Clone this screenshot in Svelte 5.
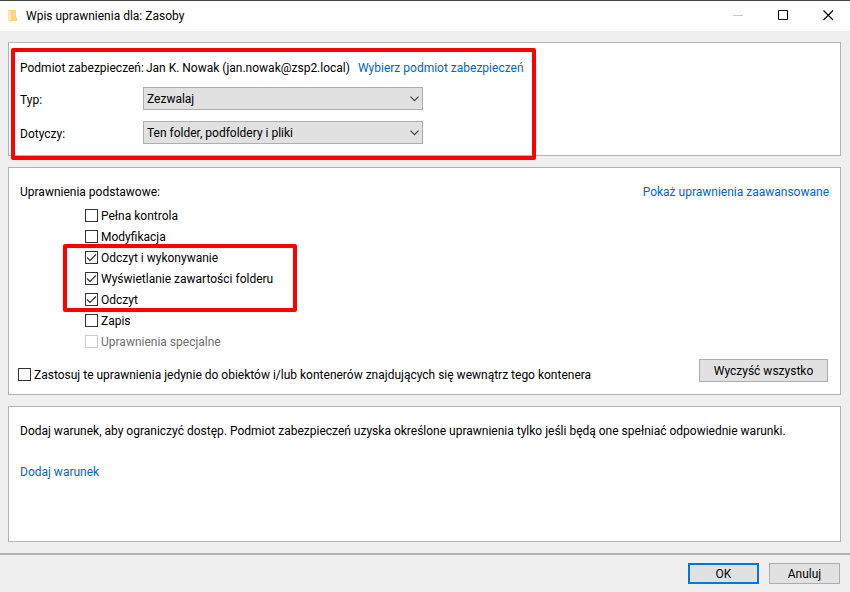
<!-- permission entry dialog: principal, basic permissions, condition -->
<script lang="ts">
	type Permission = { id: string; label: string; checked: boolean; disabled?: boolean };

	let entryType = $state('Zezwalaj');
	let scope = $state('Ten folder, podfoldery i pliki');
	let onlyThisContainer = $state(false);

	const entryTypes = ['Zezwalaj', 'Odmów'];
	const scopes = ['Tylko ten folder', 'Ten folder, podfoldery i pliki', 'Ten folder i podfoldery', 'Ten folder i pliki'];

	let before = $state<Permission[]>([
		{ id: 'full', label: 'Pełna kontrola', checked: false },
		{ id: 'modify', label: 'Modyfikacja', checked: false }
	]);
	let marked = $state<Permission[]>([
		{ id: 'read-exec', label: 'Odczyt i wykonywanie', checked: true },
		{ id: 'list', label: 'Wyświetlanie zawartości folderu', checked: true },
		{ id: 'read', label: 'Odczyt', checked: true }
	]);
	let after = $state<Permission[]>([
		{ id: 'write', label: 'Zapis', checked: false },
		{ id: 'special', label: 'Uprawnienia specjalne', checked: false, disabled: true }
	]);

	function clearAll() {
		for (const p of [...before, ...marked, ...after]) p.checked = false;
		onlyThisContainer = false;
	}
</script>

{#snippet chevron()}
	<svg class="chevron" viewBox="0 0 9 6" aria-hidden="true"><path d="M0.5 0.7 4.5 4.7 8.5 0.7" /></svg>
{/snippet}

{#snippet tick()}
	<svg class="tick" viewBox="0 0 13 13" aria-hidden="true"><path d="M2 6.5 5 9.5 11 3.5" /></svg>
{/snippet}

{#snippet permission(p: Permission)}
	<label class="check" class:disabled={p.disabled} for={p.id}>
		<span class="box">
			<input id={p.id} type="checkbox" bind:checked={p.checked} disabled={p.disabled} />
			{@render tick()}
		</span>
		<span>{p.label}</span>
	</label>
{/snippet}

<div class="window">
	<header class="titlebar">
		<svg class="folder" viewBox="0 0 10 14" aria-hidden="true">
			<path d="M0 1h7v11H0z" fill="#f3cf6b" />
			<path d="M7 9h2v3H6z" fill="#eec252" />
			<path d="M3 1h5v9l1 1v1H3z" fill="#fbd978" />
			<path d="M0 1l3 1v11L0 12z" fill="#fce6a6" />
		</svg>
		<h1>Wpis uprawnienia dla: Zasoby</h1>
		<div class="caption">
			<button type="button" aria-label="Minimalizuj" disabled>
				<svg viewBox="0 0 11 11"><path d="M0 5.5h10" stroke="#c6c6c6" /></svg>
			</button>
			<button type="button" aria-label="Maksymalizuj">
				<svg viewBox="0 0 11 11"><path d="M0.5 0.5h9v9h-9z" stroke="#000" /></svg>
			</button>
			<button type="button" aria-label="Zamknij">
				<svg viewBox="0 0 11 11"><path d="M0.5 0.5l9.5 9.5M10 0.5l-9.5 9.5" stroke="#000" stroke-width="1.1" /></svg>
			</button>
		</div>
	</header>

	<main>
		<section class="panel principal">
			<div class="field">
				<span>Podmiot zabezpieczeń:</span>
				<span class="name">Jan K. Nowak (jan.nowak@zsp2.local)</span>
				<a href="#principal">Wybierz podmiot zabezpieczeń</a>
			</div>
			<div class="field">
				<label class="caption-text" for="entry-type">Typ:</label>
				<span class="dropdown">
					<select id="entry-type" bind:value={entryType}>
						{#each entryTypes as t (t)}<option>{t}</option>{/each}
					</select>
					{@render chevron()}
				</span>
			</div>
			<div class="field">
				<label class="caption-text" for="scope">Dotyczy:</label>
				<span class="dropdown">
					<select id="scope" bind:value={scope}>
						{#each scopes as s (s)}<option>{s}</option>{/each}
					</select>
					{@render chevron()}
				</span>
			</div>
			<span class="highlight"></span>
		</section>

		<section class="panel permissions">
			<div class="heading">
				<h2>Uprawnienia podstawowe:</h2>
				<a href="#advanced">Pokaż uprawnienia zaawansowane</a>
			</div>
			<div class="list">
				{#each before as p (p.id)}{@render permission(p)}{/each}
				<div class="group">
					{#each marked as p (p.id)}{@render permission(p)}{/each}
					<span class="highlight"></span>
				</div>
				{#each after as p (p.id)}{@render permission(p)}{/each}
			</div>
			<div class="inherit">
				<label class="check" for="only-container">
					<span class="box">
						<input id="only-container" type="checkbox" bind:checked={onlyThisContainer} />
						{@render tick()}
					</span>
					<span>Zastosuj te uprawnienia jedynie do obiektów i/lub kontenerów znajdujących się wewnątrz tego kontenera</span>
				</label>
				<button type="button" class="btn clear" onclick={clearAll}>Wyczyść wszystko</button>
			</div>
		</section>

		<section class="panel condition">
			<p>Dodaj warunek, aby ograniczyć dostęp. Podmiot zabezpieczeń uzyska określone uprawnienia tylko jeśli będą one spełniać odpowiednie warunki.</p>
			<a href="#condition">Dodaj warunek</a>
		</section>
	</main>

	<footer>
		<button type="button" class="btn default">OK</button>
		<button type="button" class="btn">Anuluj</button>
	</footer>
</div>

<style>
	:global(body) {
		background: #efefef;
	}
	.window {
		box-sizing: border-box;
		display: flex;
		flex-direction: column;
		min-height: 100vh;
		background: #efefef;
		color: #000;
		font-family: 'Segoe UI', Roboto, 'Open Sans', sans-serif;
		font-size: 12px;
		line-height: 16px;
	}
	.window :is(button, select) {
		font: inherit;
		color: inherit;
	}
	h1,
	h2,
	p {
		margin: 0;
		font-size: inherit;
		font-weight: 400;
	}
	a {
		color: #0066cc;
		text-decoration: none;
	}
	a:hover {
		text-decoration: underline;
	}

	.titlebar {
		display: flex;
		align-items: center;
		height: 30px;
		padding-left: 8px;
		border-top: 1px solid #444;
		background: #fff;
	}
	.folder {
		width: 10px;
		height: 14px;
		margin-right: 8px;
	}
	.caption {
		display: flex;
		align-self: stretch;
		margin-left: auto;
	}
	.caption button {
		display: grid;
		place-items: center;
		width: 45px;
		padding: 0 0 2px 2px;
		border: none;
		background: none;
	}
	.caption svg {
		width: 11px;
		height: 11px;
		fill: none;
	}

	main {
		flex: 1;
		display: flex;
		flex-direction: column;
		gap: 11px;
		padding: 11px 9px 11px 8px;
	}
	.panel {
		position: relative;
		border: 1px solid #b2b2b2;
		background: #fff;
	}
	.highlight {
		position: absolute;
		border: 4px solid #fe0000;
		border-radius: 2px;
		pointer-events: none;
	}

	.principal {
		display: flex;
		flex-direction: column;
		gap: 11px;
		padding: 17px 11px 11px;
	}
	.principal .highlight {
		inset: 5px auto -5px 2px;
		width: 517px;
	}
	.field {
		display: flex;
		align-items: center;
	}
	.name {
		margin: 0 8px 0 2px;
	}
	.caption-text {
		width: 123px;
		padding-top: 2px;
	}
	.dropdown {
		position: relative;
		width: 280px;
	}
	select {
		appearance: none;
		box-sizing: border-box;
		display: block;
		width: 100%;
		height: 23px;
		padding: 0 20px 0 3px;
		border: 1px solid #adadad;
		border-radius: 0;
		background: #e1e1e1;
	}
	.chevron {
		position: absolute;
		top: 9px;
		right: 4px;
		width: 9px;
		height: 6px;
		fill: none;
		stroke: #444;
		stroke-width: 1.2;
		pointer-events: none;
	}

	.permissions {
		padding: 16px 11px 9px;
	}
	.heading {
		display: flex;
		justify-content: space-between;
	}
	.list {
		padding: 5px 0 0 65px;
	}
	.group {
		position: relative;
	}
	.group .highlight {
		inset: -3px auto -2px -22px;
		width: 226px;
	}
	.check {
		display: flex;
		align-items: center;
		gap: 3px;
		width: fit-content;
		height: 21px;
	}
	.disabled {
		color: #6d6d6d;
	}
	.box {
		position: relative;
		height: 13px;
	}
	.box input {
		appearance: none;
		box-sizing: border-box;
		display: block;
		width: 13px;
		height: 13px;
		margin: 0;
		border: 1px solid #333;
		background: #fff;
	}
	.box input:disabled {
		border-color: #ccc;
	}
	.tick {
		position: absolute;
		inset: 0;
		width: 13px;
		height: 13px;
		fill: none;
		stroke: #333;
		stroke-width: 1.2;
		pointer-events: none;
		visibility: hidden;
	}
	.box input:checked + .tick {
		visibility: visible;
	}
	.inherit {
		display: flex;
		align-items: flex-start;
		justify-content: space-between;
		margin: 7px 1px 0 -2px;
	}
	.inherit .check {
		padding-top: 5px;
	}

	.btn {
		box-sizing: border-box;
		min-width: 71px;
		height: 21px;
		padding: 0 12px;
		border: 1px solid #adadad;
		border-radius: 0;
		background: #e1e1e1;
		line-height: 18px;
	}
	.clear {
		min-width: 129px;
		height: 23px;
	}
	.default {
		border: 2px solid #0078d7;
	}

	.condition {
		flex: 1;
		padding: 16px 11px;
	}
	.condition p {
		margin-bottom: 25px;
	}

	footer {
		display: flex;
		justify-content: flex-end;
		gap: 10px;
		padding: 8px 10px;
		border-top: 2px solid #b2b2b2;
	}
</style>
